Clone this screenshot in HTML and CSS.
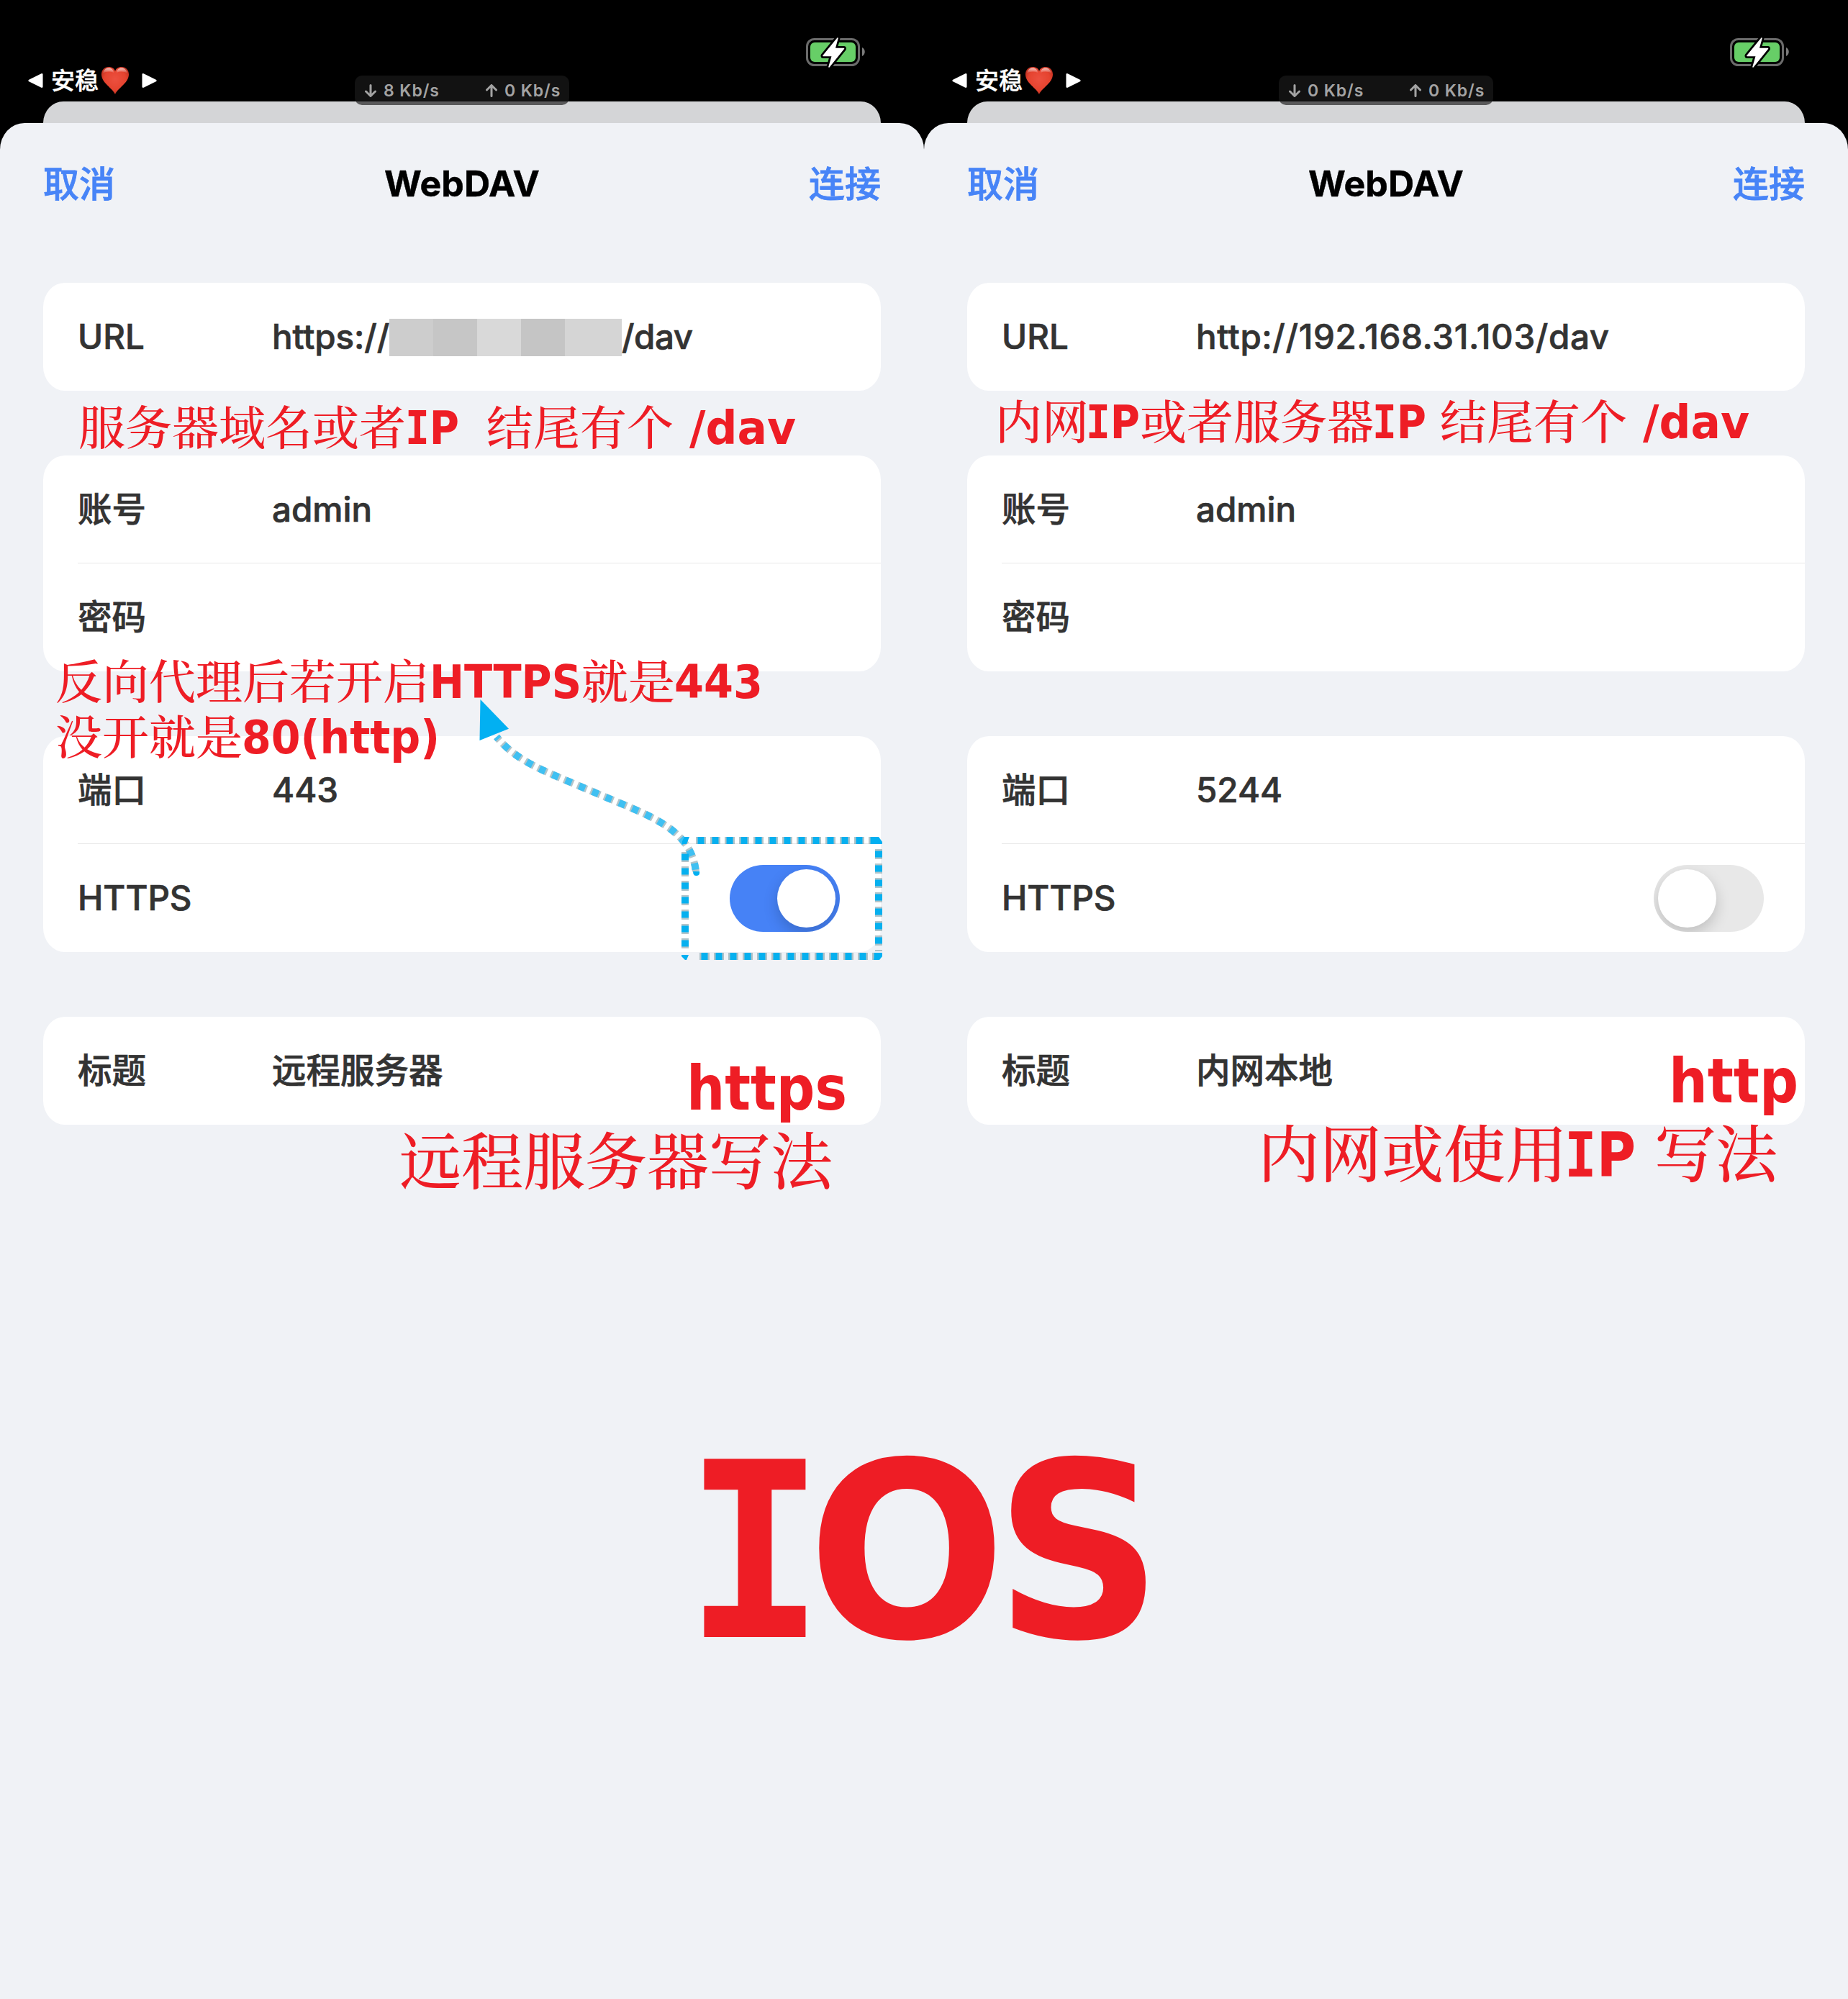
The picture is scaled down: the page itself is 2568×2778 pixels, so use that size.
FILE: index.html
```html
<!DOCTYPE html>
<html lang="zh-CN">
<head>
<meta charset="utf-8">
<title>WebDAV</title>
<link rel="stylesheet" href="styles.css">
</head>
<body>
<svg class="defs" width="0" height="0" aria-hidden="true">
  <defs>
    <radialGradient id="heartFill" cx="50%" cy="45%" r="60%">
      <stop offset="0" stop-color="#ec503f"/><stop offset=".65" stop-color="#e5432f"/><stop offset="1" stop-color="#b92d1d"/>
    </radialGradient>
    <linearGradient id="heartShine" x1="0" y1="0" x2="0" y2="1">
      <stop offset="0" stop-color="#fff" stop-opacity=".7"/><stop offset="1" stop-color="#fff" stop-opacity="0"/>
    </linearGradient>
    <symbol id="heart" viewBox="0 0 38 38" preserveAspectRatio="none">
      <path d="M19 38C15 29 0 22 0 10.500C0 4.500 4 0 10 0C15 0 18 2.500 19 6C20 2.500 23 0 28 0C34 0 38 4.500 38 10.500C38 22 23 29 19 38Z" fill="url(#heartFill)"/>
      <path d="M2 9C3 4 6 1.500 10 1.500C14 1.500 17 4 17 8C12 6 7 6 2 9ZM36 9C35 4 32 1.500 28 1.500C24 1.500 21 4 21 8C26 6 31 6 36 9Z" fill="url(#heartShine)"/>
    </symbol>
    <symbol id="battery" viewBox="0 0 84 44">
      <rect x="1.500" y="4.500" width="72" height="36" rx="10" fill="none" stroke="#6b6b6b" stroke-width="3"/>
      <rect x="6" y="9" width="63" height="27" rx="6" fill="#67ce67"/>
      <path d="M78 16C83 18 83 26 78 28Z" fill="#7b7b7b"/>
      <path d="M44 3L40 17.500H52.500L32 43L36.500 27.500H24Z" fill="#fff" stroke="#000" stroke-width="7" stroke-linejoin="round"/>
      <path d="M44 3L40 17.500H52.500L32 43L36.500 27.500H24Z" fill="#fff" stroke="#fff" stroke-width="1.500" stroke-linejoin="round"/>
    </symbol>
    <symbol id="down" viewBox="0 0 16 18"><path d="M8 1.500V16M1.500 10L8 16.500L14.500 10" fill="none" stroke="#a3a3a3" stroke-width="3" stroke-linecap="round" stroke-linejoin="round"/></symbol>
    <symbol id="up" viewBox="0 0 16 18"><path d="M8 16.500V2M1.500 8L8 1.500L14.500 8" fill="none" stroke="#a3a3a3" stroke-width="3" stroke-linecap="round" stroke-linejoin="round"/></symbol>
    <symbol id="prev" viewBox="0 0 22 22"><path d="M20 2V20L2 11Z" fill="#fff" stroke="#fff" stroke-width="3" stroke-linejoin="round"/></symbol>
    <symbol id="next" viewBox="0 0 22 22"><path d="M2 2V20L20 11Z" fill="#fff" stroke="#fff" stroke-width="3" stroke-linejoin="round"/></symbol>
  </defs>
</svg>

<main class="board">
  <section class="phone">
    <header class="status">
      <div class="back"><svg class="tri"><use href="#prev"/></svg><span class="back-name">安稳</span><svg class="heart"><use href="#heart"/></svg><svg class="tri tri-next"><use href="#next"/></svg></div>
      <svg class="battery"><use href="#battery"/></svg>
    </header>
    <div class="under-sheet"></div>
    <div class="net"><svg class="arrow"><use href="#down"/></svg><span>8 Kb/s</span><svg class="arrow arrow-up"><use href="#up"/></svg><span>0 Kb/s</span></div>
    <div class="sheet">
      <nav class="nav"><a class="action">取消</a><h1 class="title">WebDAV</h1><a class="action action-end">连接</a></nav>
      <div class="form">
        <div class="card"><div class="row"><span class="label">URL</span><span class="value value-masked"><span class="scheme">https://</span><span class="mask"><i class="m1"></i><i class="m2"></i><i class="m3"></i><i class="m4"></i><i class="m5"></i></span><span class="path">/dav</span></span></div></div>
        <div class="card">
          <div class="row"><span class="label">账号</span><span class="value">admin</span></div>
          <div class="row row-next"><span class="label">密码</span></div>
        </div>
        <div class="card">
          <div class="row"><span class="label">端口</span><span class="value">443</span></div>
          <div class="row row-next"><span class="label">HTTPS</span><span class="toggle toggle-on"><span class="knob"></span></span></div>
        </div>
        <div class="card"><div class="row"><span class="label">标题</span><span class="value">远程服务器</span></div></div>
      </div>
    </div>
  </section>

  <section class="phone">
    <header class="status">
      <div class="back"><svg class="tri"><use href="#prev"/></svg><span class="back-name">安稳</span><svg class="heart"><use href="#heart"/></svg><svg class="tri tri-next"><use href="#next"/></svg></div>
      <svg class="battery"><use href="#battery"/></svg>
    </header>
    <div class="under-sheet"></div>
    <div class="net"><svg class="arrow"><use href="#down"/></svg><span>0 Kb/s</span><svg class="arrow arrow-up"><use href="#up"/></svg><span>0 Kb/s</span></div>
    <div class="sheet">
      <nav class="nav"><a class="action">取消</a><h1 class="title">WebDAV</h1><a class="action action-end">连接</a></nav>
      <div class="form">
        <div class="card"><div class="row"><span class="label">URL</span><span class="value value-ip">http://192.168.31.103/dav</span></div></div>
        <div class="card">
          <div class="row"><span class="label">账号</span><span class="value">admin</span></div>
          <div class="row row-next"><span class="label">密码</span></div>
        </div>
        <div class="card">
          <div class="row"><span class="label">端口</span><span class="value">5244</span></div>
          <div class="row row-next"><span class="label">HTTPS</span><span class="toggle"><span class="knob"></span></span></div>
        </div>
        <div class="card"><div class="row"><span class="label">标题</span><span class="value">内网本地</span></div></div>
      </div>
    </div>
  </section>

  <!-- Annotations drawn freely over both phones -->
  <svg class="notes" viewBox="0 0 2568 2778">
    <g class="han">
      <text x="109" y="618" textLength="455">服务器域名或者</text>
      <text x="676" y="618" textLength="260">结尾有个</text>
      <text x="1383" y="610" textLength="130">内网</text>
      <text x="1584" y="610" textLength="325">或者服务器</text>
      <text x="2001" y="610" textLength="260">结尾有个</text>
      <text x="77" y="971" textLength="520">反向代理后若开启</text>
      <text x="808" y="971" textLength="130">就是</text>
      <text x="77" y="1048" textLength="260">没开就是</text>
    </g>
    <g class="latin">
      <text x="563" y="617" textLength="75" lengthAdjust="spacingAndGlyphs"><tspan class="slab">I</tspan>P</text>
      <text x="958" y="617" textLength="148" lengthAdjust="spacingAndGlyphs">/dav</text>
      <text x="1509" y="609" textLength="75" lengthAdjust="spacingAndGlyphs"><tspan class="slab">I</tspan>P</text>
      <text x="1907" y="609" textLength="75" lengthAdjust="spacingAndGlyphs"><tspan class="slab">I</tspan>P</text>
      <text x="2283" y="609" textLength="148" lengthAdjust="spacingAndGlyphs">/dav</text>
      <text x="597" y="970" textLength="211" lengthAdjust="spacingAndGlyphs">HTTPS</text>
      <text x="937" y="970" textLength="123" lengthAdjust="spacingAndGlyphs">443</text>
      <text x="336" y="1047" textLength="275" lengthAdjust="spacingAndGlyphs">80(http)</text>
    </g>
    <g class="han han-large">
      <text x="555" y="1646" textLength="602">远程服务器写法</text>
      <text x="1748" y="1636" textLength="430">内网或使用</text>
      <text x="2299" y="1636" textLength="171">写法</text>
    </g>
    <g class="latin latin-large">
      <text x="954" y="1542" textLength="223" lengthAdjust="spacingAndGlyphs">https</text>
      <text x="2319" y="1532" textLength="180" lengthAdjust="spacingAndGlyphs">http</text>
      <text x="2174" y="1635" textLength="99" lengthAdjust="spacingAndGlyphs"><tspan class="slab">I</tspan>P</text>
    </g>
    <text class="platform" transform="scale(.955 1)" x="996 1175 1447" y="2275"><tspan class="slab">I</tspan>OS</text>

    <g class="dash-edge">
      <path d="M967 1211C960 1150 900 1133 828 1102S720 1060 690 1024"/>
      <path d="M967 1168H1218M972 1329H1218M952 1184V1322M1221 1180V1322"/>
    </g>
    <path class="dash-core dash-curve" d="M967 1211C960 1150 900 1133 828 1102S720 1060 690 1024"/>
    <path class="dash-core" d="M969.500 1168H1218M974.500 1329H1218M952 1186.500V1322M1221 1182.500V1322"/>
    <path class="tip" d="M667.500 972L707 1012.700L666.500 1029ZM951 1163H958L954 1173H948V1169ZM1216 1163H1221L1226 1170V1173H1214ZM947 1327H957L954 1334H952L947 1329ZM1217 1324H1226V1329L1222 1334H1214ZM963 1211H972Q973 1217 967.500 1217Q963 1217 963 1211Z"/>
  </svg>
</main>
</body>
</html>
```
FILE: styles.css
```css
* { box-sizing: border-box; }
body { margin: 0; background: #f0f2f6; font-family: Inter, "Noto Sans CJK SC", sans-serif; }
.defs { position: absolute; }

.board { position: relative; display: grid; grid-template-columns: 1284px 1284px; width: 2568px; height: 2778px; overflow: hidden; }
.phone { position: relative; display: flex; flex-direction: column; background: linear-gradient(#000 240px, #f0f2f6 240px); }

.status { display: flex; justify-content: space-between; align-items: flex-start; height: 141px; padding: 50px 80px 0 39px; }
.back { display: flex; align-items: center; height: 38px; margin-top: 43px; }
.tri { width: 21px; height: 22px; }
.back-name { margin-left: 11px; color: #fff; font-size: 33px; line-height: 38px; font-weight: 500; -webkit-text-stroke: .4px #fff; }
.heart { width: 38px; height: 38px; margin-left: 4px; }
.tri-next { margin-left: 18px; }
.battery { width: 84px; height: 44px; }

.under-sheet { height: 30px; margin: 0 60px; border-radius: 28px 28px 0 0 / 30px 30px 0 0; background: #d4d5d7; }
.net { position: absolute; left: 493px; top: 105px; display: flex; align-items: center; width: 298px; height: 41px; padding-left: 14px; border-radius: 10px; background: rgba(27, 27, 27, .665); color: #a3a3a3; font-size: 23px; font-weight: 600; letter-spacing: .9px; line-height: 41px; white-space: nowrap; }
.net span { width: 78px; margin-left: 10px; padding-top: 1px; }
.arrow { flex: none; width: 16px; height: 18px; }
.arrow-up { margin-left: 64px; }

.sheet { flex: 1; padding: 0 60px; border-radius: 34px 34px 0 0 / 37px 37px 0 0; background: #f0f2f6; }
.nav { display: grid; grid-template-columns: 1fr auto 1fr; align-items: center; height: 168px; }
.action { padding-top: 3px; color: #4784f7; font-size: 50px; font-weight: 500; line-height: 165px; -webkit-text-stroke: .8px #4784f7; }
.action-end { text-align: right; }
.title { margin: 0; color: #000; font-size: 50px; font-weight: 700; letter-spacing: .1px; line-height: 168px; -webkit-text-stroke: .5px #000; }

.form { display: flex; flex-direction: column; gap: 90px; margin-top: 54px; }
.card { border-radius: 30px / 34px; background: #fff; }
.row { display: flex; align-items: center; height: 150px; margin-left: 48px; color: #333; font-size: 47.5px; font-weight: 500; line-height: 150px; -webkit-text-stroke: .7px #333; }
.row-next { height: 151px; margin-top: -1px; border-top: 1px solid #e8e8e8; }
.label { width: 270px; }
.value { white-space: nowrap; }
.value-ip { letter-spacing: .6px; }
.value-masked { display: flex; align-items: center; }
.scheme { width: 163px; letter-spacing: -.1px; }
.path { letter-spacing: -.5px; }
.mask { display: flex; height: 52px; margin-top: 2px; }
.mask i { width: 61px; }
.mask .m1 { background: #cdcdcd; }
.mask .m2 { background: #c6c6c6; }
.mask .m3 { background: #d9d9d9; }
.mask .m4 { background: #c5c5c5; }
.mask .m5 { width: 79px; background: #d5d5d5; }

.toggle { display: flex; width: 153px; height: 93px; margin: 0 57px 0 auto; padding: 6px; border-radius: 47px; background: #e8e8e8; overflow: hidden; }
.toggle-on { justify-content: flex-end; background: #4682f6; }
.knob { width: 81px; height: 81px; border-radius: 50%; background: #fff; box-shadow: 0 8px 20px rgba(0, 0, 0, .18); }

.notes { position: absolute; inset: 0; width: 2568px; height: 2778px; }
.han { fill: #ee1d25; font: 500 65px "Noto Serif CJK SC", "Noto Sans CJK SC", serif; }
.latin { fill: #ee1d25; font: 700 64.5px "DejaVu Sans", sans-serif; }
.slab { font-family: "DejaVu Sans Mono", monospace; }
.han-large { font-size: 86px; }
.latin-large { font-size: 85px; }
.platform { fill: #ee1d25; font: 700 340px "DejaVu Sans", sans-serif; }
.platform .slab { font-family: "DejaVu Sans Mono", monospace; }
.dash-edge { fill: none; stroke: #8ba6ad; stroke-opacity: .65; stroke-width: 10; stroke-dasharray: 14 6; }
.dash-core { fill: none; stroke: #06b0ef; stroke-width: 10; stroke-dasharray: 9 11; }
.dash-curve { stroke: #3fc0f2; stroke-dashoffset: -2.500; }
.tip { fill: #02b0f2; }
```
